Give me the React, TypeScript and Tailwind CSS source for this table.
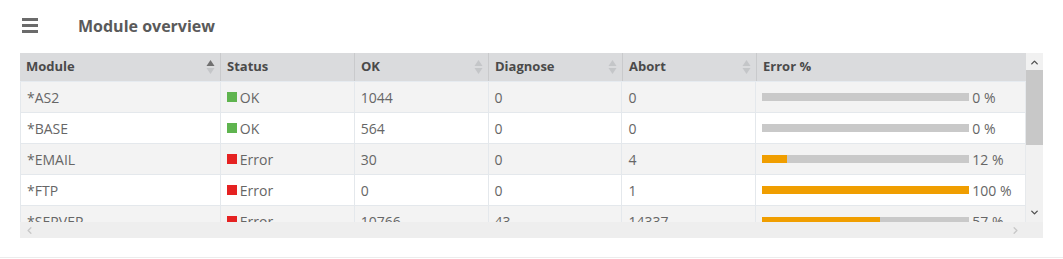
import { ChevronDown, ChevronLeft, ChevronRight, ChevronUp } from "lucide-react";

type Row = {
  name: string;
  ok: boolean;
  okCount: number;
  diagnose: number;
  abort: number;
  error: number;
};

const rows: Row[] = [
  { name: "*AS2", ok: true, okCount: 1044, diagnose: 0, abort: 0, error: 0 },
  { name: "*BASE", ok: true, okCount: 564, diagnose: 0, abort: 0, error: 0 },
  { name: "*EMAIL", ok: false, okCount: 30, diagnose: 0, abort: 4, error: 12 },
  { name: "*FTP", ok: false, okCount: 0, diagnose: 0, abort: 1, error: 100 },
  { name: "*SERVER", ok: false, okCount: 10766, diagnose: 43, abort: 14337, error: 57 },
];

function SortIcon({ active }: { active?: boolean }) {
  return (
    <svg width="9" height="16" viewBox="0 0 9 16" className="shrink-0">
      <path d="M4.5 1 L8.5 7 L0.5 7 Z" fill={active ? "#707070" : "#c4c6c8"} />
      <path d="M4.5 15 L8.5 9 L0.5 9 Z" fill="#c4c6c8" />
    </svg>
  );
}

function HeadCell({
  label,
  width,
  sort,
  active,
}: {
  label: string;
  width: string;
  sort?: boolean;
  active?: boolean;
}) {
  return (
    <div
      className={`${width} flex items-center justify-between pl-[6px] pr-[5px] border-r border-[#c9cacc] last:border-r-0`}
    >
      <span className="font-bold text-[13px] text-[#4a4a4a]">{label}</span>
      {sort && <SortIcon active={active} />}
    </div>
  );
}

function StatusCell({ ok }: { ok: boolean }) {
  return (
    <div className="flex items-center gap-[3px]">
      <span className={`w-[10px] h-[10px] ${ok ? "bg-[#5fb44f]" : "bg-[#e52222]"}`} />
      <span>{ok ? "OK" : "Error"}</span>
    </div>
  );
}

function ErrorBar({ value }: { value: number }) {
  return (
    <div className="flex items-center gap-[3px]">
      <div className="w-[207px] h-[8px] bg-[#c9c9c9]">
        <div className="h-full bg-[#f09e00]" style={{ width: `${value}%` }} />
      </div>
      <span>{value} %</span>
    </div>
  );
}

export default function App() {
  return (
    <div
      className="w-[1063px] h-[259px] bg-white text-[#666] overflow-hidden"
      style={{ fontFamily: '"Open Sans", "Liberation Sans", sans-serif' }}
    >
      <div className="flex items-center h-[53px] pb-[2px]">
        <div className="ml-[22px] w-[16px] flex flex-col gap-[3px]">
          <span className="h-[3px] bg-[#6b6b6b]" />
          <span className="h-[3px] bg-[#6b6b6b]" />
          <span className="h-[3px] bg-[#6b6b6b]" />
        </div>
        <h1 className="ml-[40px] font-bold text-[16px] text-[#5a5a5a]">Module overview</h1>
      </div>

      <div className="ml-[20px] w-[1023px] flex flex-col">
        <div className="flex">
          <div className="w-[1006px] flex flex-col">
            <div className="flex h-[29px] bg-[#dadbdd] border-b border-[#e6ebf0]">
              <HeadCell label="Module" width="w-[201px]" sort active />
              <HeadCell label="Status" width="w-[134px]" />
              <HeadCell label="OK" width="w-[134px]" sort />
              <HeadCell label="Diagnose" width="w-[134px]" sort />
              <HeadCell label="Abort" width="w-[134px]" sort />
              <HeadCell label="Error %" width="w-[269px]" />
            </div>
            <div className="h-[140px] overflow-hidden border-r border-[#e6e9ec]">
              {rows.map((r, i) => (
                <div
                  key={r.name}
                  className={`flex h-[31px] items-center text-[14px] border-b border-[#e4e8ec] ${
                    i % 2 === 0 ? "bg-[#f3f3f3]" : "bg-white"
                  }`}
                >
                  <div className="w-[201px] h-full flex items-center pl-[6px] border-r border-l border-[#e4e8ec]">
                    {r.name}
                  </div>
                  <div className="w-[134px] h-full flex items-center pl-[6px] border-r border-[#e4e8ec]">
                    <StatusCell ok={r.ok} />
                  </div>
                  <div className="w-[134px] h-full flex items-center pl-[6px] border-r border-[#e4e8ec]">
                    {r.okCount}
                  </div>
                  <div className="w-[134px] h-full flex items-center pl-[6px] border-r border-[#e4e8ec]">
                    {r.diagnose}
                  </div>
                  <div className="w-[134px] h-full flex items-center pl-[6px] border-r border-[#e4e8ec]">
                    {r.abort}
                  </div>
                  <div className="w-[269px] h-full flex items-center pl-[6px]">
                    <ErrorBar value={r.error} />
                  </div>
                </div>
              ))}
            </div>
          </div>
          <div className="w-[17px] h-[169px] bg-[#f1f1f1] flex flex-col items-center">
            <ChevronUp size={11} strokeWidth={3} className="text-[#505050] mt-[4px]" />
            <div className="w-full h-[75px] bg-[#c8c8c8] mt-[2px]" />
            <div className="flex-1" />
            <ChevronDown size={11} strokeWidth={3} className="text-[#505050] mb-[4px]" />
          </div>
        </div>
        <div className="h-[16px] bg-[#eeeeee] flex items-center justify-between pl-[4px] pr-[22px]">
          <ChevronLeft size={11} strokeWidth={3} className="text-[#c8c8c8]" />
          <ChevronRight size={11} strokeWidth={3} className="text-[#c8c8c8]" />
        </div>
      </div>

      <div className="mt-[19px] border-t border-[#ececec]" />
    </div>
  );
}
